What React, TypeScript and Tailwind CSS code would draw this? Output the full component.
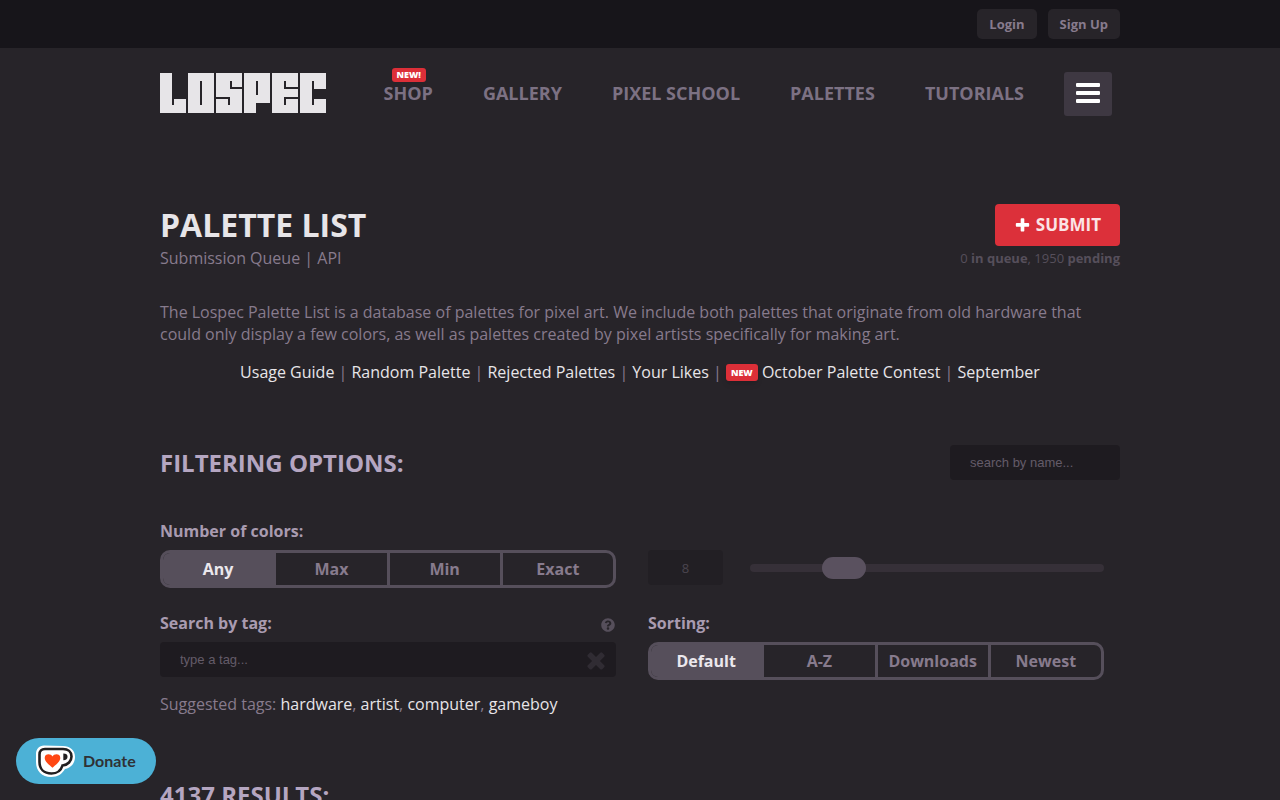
import { FaQuestionCircle } from "react-icons/fa";

const navLinks = ["Gallery", "Pixel School", "Palettes", "Tutorials"];
const tags = ["hardware", "artist", "computer", "gameboy"];

function Logo() {
  return (
    <svg
      role="img"
      aria-label="Lospec"
      width="166"
      height="40"
      viewBox="0 0 83 20"
      fill="#e7e5e8"
      fillRule="evenodd"
      shapeRendering="crispEdges"
    >
      <path d="M0 0H6V16H7V13H13V20H0Z" />
      <path d="M14 0H27V20H14ZM20 4V16H21V4Z" />
      <path d="M28 0H41V7H36V4H35V8H41V20H28V13H34V16H35V12H28Z" />
      <path d="M42 0H55V15H48V20H42ZM48 4V11H49V4Z" />
      <path d="M56 0H69V7H63V4H62V8H69V12H62V16H63V13H69V20H56Z" />
      <path d="M70 0H83V8H77V4H76V16H77V13H83V20H70Z" />
    </svg>
  );
}

function PlusIcon() {
  return (
    <svg width="17" height="17" viewBox="0 0 1792 1792" fill="#fff" aria-hidden="true">
      <path d="M1600 736v192q0 40-28 68t-68 28h-416v416q0 40-28 68t-68 28h-192q-40 0-68-28t-28-68v-416h-416q-40 0-68-28t-28-68v-192q0-40 28-68t68-28h416v-416q0-40 28-68t68-28h192q40 0 68 28t28 68v416h416q40 0 68 28t28 68z" />
    </svg>
  );
}

function TimesIcon() {
  return (
    <svg width="26" height="26" viewBox="0 0 1792 1792" fill="#302c33" aria-hidden="true">
      <path d="M1490 1322q0 40-28 68l-136 136q-28 28-68 28t-68-28l-294-294-294 294q-28 28-68 28t-68-28l-136-136q-28-28-28-68t28-68l294-294-294-294q-28-28-28-68t28-68l136-136q28-28 68-28t68 28l294 294 294-294q28-28 68-28t68 28l136 136q28 28 28 68t-28 68l-294 294 294 294q28 28 28 68z" />
    </svg>
  );
}

function CupIcon() {
  return (
    <svg width="39" height="32" viewBox="0 0 39 32" aria-hidden="true">
      <path
        d="M8 0.5C3 1 0 4 0 9v8c0 9 6 15 15 15 7 0 11-3 14-8 6-1 10-6 10-12 0-7-5-11-12-11Z"
        fill="#fff"
      />
      <path
        d="M9 4h18c5 0 8.500 3 8.500 7.500S32 20 26.500 20.500C25 25.500 21 28.500 15.500 28.500 8 28.500 3.500 24 3.500 17V9.500C3.500 6 5.500 4 9 4Z"
        fill="#fff"
        stroke="#211f20"
        strokeWidth="2.600"
      />
      <path d="M27.300 8.500c3 0 4.200 1.200 4.200 3.200s-1.200 3.500-4.200 3.500Z" fill="#211f20" />
      <path
        d="M16.500 11.500c1.500-3 7.800-3.200 7.800 1.500 0 3.700-4.800 7-7.800 9.700-3-2.700-7.800-6-7.800-9.700 0-4.700 6.300-4.500 7.800-1.500Z"
        fill="#ff4713"
      />
    </svg>
  );
}

function Segmented({
  name,
  label,
  options,
}: {
  name: string;
  label: string;
  options: string[];
}) {
  return (
    <fieldset>
      <legend className="mb-2 font-bold text-[#a99bb0]">{label}</legend>
      <div className="flex h-[38px] overflow-hidden rounded-[10px] border-3 border-[#564f5b]">
        {options.map((option, i) => (
          <label
            key={option}
            className="flex flex-1 cursor-pointer items-center justify-center border-l-3 border-[#564f5b] font-bold text-[#877b8d] first:border-l-0 has-checked:bg-[#564f5b] has-checked:text-[#ebe8ed]"
          >
            <input type="radio" name={name} defaultChecked={i === 0} className="sr-only" />
            {option}
          </label>
        ))}
      </div>
    </fieldset>
  );
}

export default function App() {
  return (
    <div className="relative min-h-screen bg-[#272429] font-['Open_Sans',sans-serif] text-base leading-[22px] text-[#877b8d]">
      <div className="bg-[#17151a]">
        <div className="mx-auto flex h-12 max-w-[960px] items-center justify-end gap-[11px] text-[13px] font-bold">
          <button className="h-[30px] rounded-[5px] bg-[#272429] px-3">Login</button>
          <button className="h-[30px] rounded-[5px] bg-[#272429] px-3">Sign Up</button>
        </div>
      </div>

      <header className="mx-auto flex max-w-[960px] items-center justify-between pt-[22px] pr-2">
        <a href="#home">
          <Logo />
        </a>
        <div className="flex items-center gap-10">
          <nav className="flex gap-[50px] text-lg leading-[22px] font-bold uppercase text-[#7c7183]">
            <a href="#shop" className="relative">
              Shop
              <span className="absolute -top-[14px] left-2 rounded-[3px] bg-[#dc2f38] px-[5px] text-[9px] leading-[14px] font-extrabold text-white">
                New!
              </span>
            </a>
            {navLinks.map((link) => (
              <a key={link} href="#nav">
                {link}
              </a>
            ))}
          </nav>
          <button
            aria-label="Menu"
            className="mt-[2px] flex h-11 w-12 flex-col items-center gap-1 rounded-[3px] bg-[#3e3842] pt-[11px]"
          >
            <span className="h-1 w-6 rounded-[1px] bg-white" />
            <span className="h-1 w-6 rounded-[1px] bg-white" />
            <span className="h-1 w-6 rounded-[1px] bg-white" />
          </button>
        </div>
      </header>

      <main className="mx-auto max-w-[960px] pt-[88px] pb-16">
        <div className="flex justify-between">
          <div>
            <h1 className="mb-[1px] text-[32px] leading-[42px] font-bold text-[#e7e5e8] uppercase">
              Palette List
            </h1>
            <p>
              <a href="#queue">Submission Queue</a> | <a href="#api">API</a>
            </p>
          </div>
          <div className="flex flex-col items-end gap-[1px]">
            <button className="flex h-[42px] items-center gap-[5px] rounded-[4px] bg-[#dc303a] px-[19px] text-[17px] leading-[22px] font-bold text-[#fbe3e5] uppercase">
              <PlusIcon />
              Submit
            </button>
            <p className="text-[13px] text-[#564f5b]">
              0 <b>in queue</b>, 1950 <b>pending</b>
            </p>
          </div>
        </div>

        <p className="mt-8">
          The Lospec Palette List is a database of palettes for pixel art. We include both palettes
          that originate from old hardware that could only display a few colors, as well as palettes
          created by pixel artists specifically for making art.
        </p>

        <p className="mt-4 text-center [&_a]:text-[#e7e5e8]">
          <a href="#guide">Usage Guide</a> | <a href="#random">Random Palette</a> |{" "}
          <a href="#rejected">Rejected Palettes</a> | <a href="#likes">Your Likes</a> |{" "}
          <span className="inline-block rounded-[3px] bg-[#dc2f38] px-[5px] align-[2px] text-[9px] leading-[17px] font-extrabold text-white shadow-md">
            NEW
          </span>{" "}
          <a href="#october">October Palette Contest</a> | <a href="#september">September</a>
        </p>

        <div className="mt-[62px] flex items-center justify-between">
          <h2 className="text-2xl font-bold text-[#b5a6c1] uppercase">Filtering Options:</h2>
          <input
            type="text"
            aria-label="Search by name"
            placeholder="search by name..."
            className="h-[35px] w-[170px] rounded-[4px] bg-[#1e1b20] px-5 font-['Liberation_Sans',sans-serif] text-[13px] placeholder:text-[#645b69]"
          />
        </div>

        <div className="mt-10 grid grid-cols-2 gap-x-8 gap-y-6 pr-4">
          <Segmented name="colors" label="Number of colors:" options={["Any", "Max", "Min", "Exact"]} />

          <div className="flex items-center gap-[27px] pt-[27px]">
            <input
              type="text"
              aria-label="Color count"
              defaultValue="8"
              className="h-[35px] w-[75px] rounded-[4px] bg-[#221f24] text-center text-[13px] text-[#4b454f]"
            />
            <input
              type="range"
              aria-label="Color count slider"
              min={2}
              max={28}
              defaultValue={8}
              className="h-2 min-w-0 flex-1 appearance-none rounded-full bg-[#363038] [&::-webkit-slider-thumb]:h-[22px] [&::-webkit-slider-thumb]:w-11 [&::-webkit-slider-thumb]:appearance-none [&::-webkit-slider-thumb]:rounded-full [&::-webkit-slider-thumb]:bg-[#5a515f]"
            />
          </div>

          <div>
            <div className="mb-2 flex items-center justify-between">
              <label htmlFor="tag" className="font-bold text-[#a99bb0]">
                Search by tag:
              </label>
              <FaQuestionCircle size={14} color="#564f5b" className="mt-1 mr-[1px]" />
            </div>
            <div className="flex h-[35px] items-center rounded-[4px] bg-[#1e1b20] pr-[7px] pl-5">
              <input
                id="tag"
                type="text"
                placeholder="type a tag..."
                className="min-w-0 flex-1 font-['Liberation_Sans',sans-serif] text-[13px] placeholder:text-[#645b69]"
              />
              <button aria-label="Clear tag">
                <TimesIcon />
              </button>
            </div>
            <p className="mt-4">
              Suggested tags:{" "}
              {tags.map((tag, i) => (
                <span key={tag}>
                  {i > 0 && ", "}
                  <a href="#tag" className="text-[#e7e5e8]">
                    {tag}
                  </a>
                </span>
              ))}
            </p>
          </div>

          <Segmented
            name="sorting"
            label="Sorting:"
            options={["Default", "A-Z", "Downloads", "Newest"]}
          />
        </div>

        <h2 className="mt-16 text-2xl font-bold text-[#b5a6c1] uppercase">4137 Results:</h2>
      </main>

      <a
        href="#donate"
        className="fixed bottom-4 left-4 flex h-[46px] items-center gap-2 rounded-full bg-[#4cb1d6] px-5 font-['Lato',sans-serif] font-bold text-[#2f3135]"
      >
        <CupIcon />
        Donate
      </a>
    </div>
  );
}
